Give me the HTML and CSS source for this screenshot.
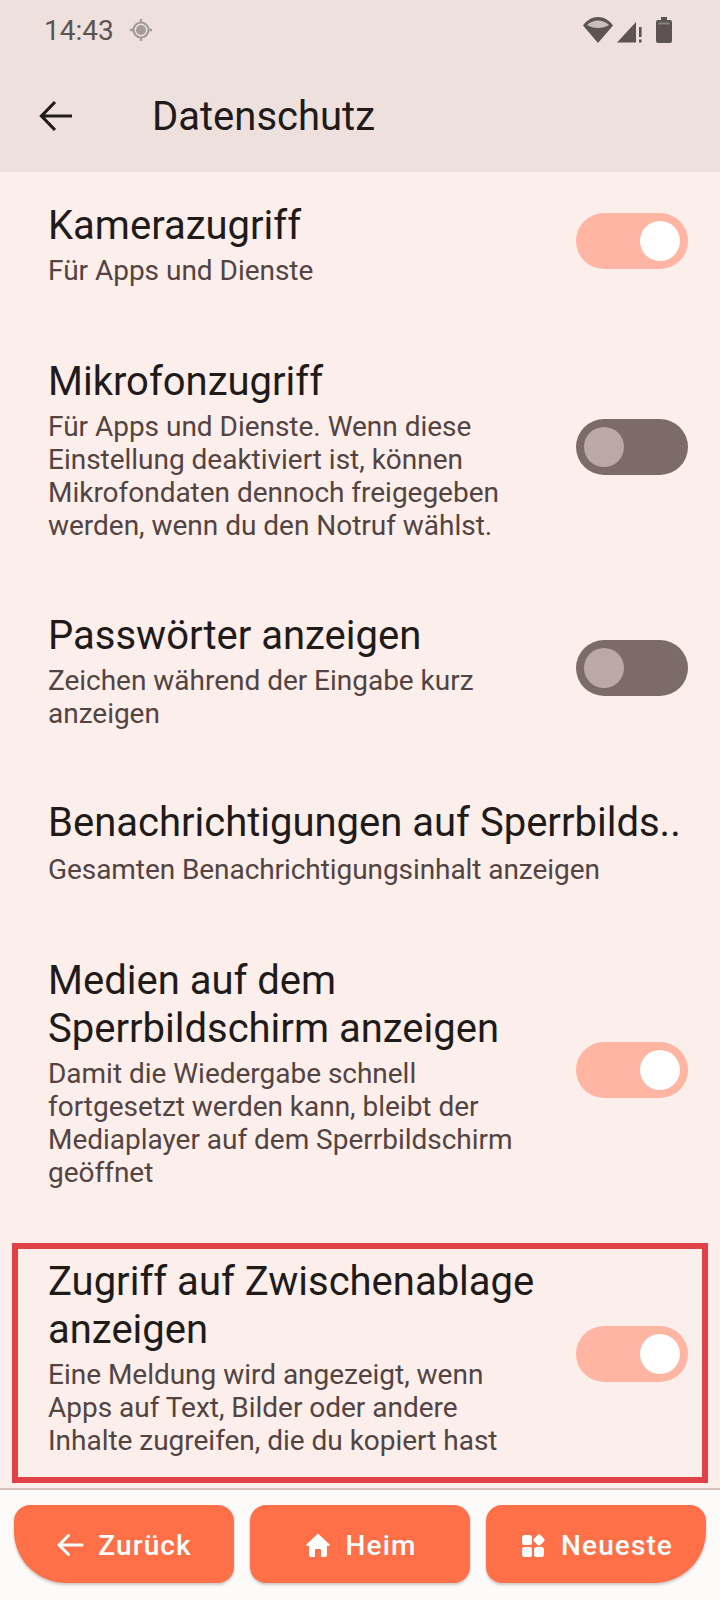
FILE: index.html
```html
<!DOCTYPE html>
<html>
<head>
  <title>Datenschutz</title>
  <link rel="stylesheet" href="styles.css">
</head>
<body>
  <header class="top">
    <div class="status">
      <span class="time">14:43</span>
      <svg class="loc" width="24" height="24" viewBox="0 0 24 24"><circle cx="12" cy="12" r="5" fill="#a39b99"/><circle cx="12" cy="12" r="7.500" fill="none" stroke="#a39b99" stroke-width="2.200"/><path d="M12 1v4M12 19v4M1 12h4M19 12h4" stroke="#a39b99" stroke-width="2.400"/></svg>
      <span class="grow"></span>
      <svg class="wifi" width="30" height="26" viewBox="0 0 30 26"><path d="M15 26 0 8.500C4 3 9 0 15 0S26 3 30 8.500z" fill="#5c5452"/><path d="M4 8C7 5 11 3.500 15 3.500S23 5 26 8C23 10 19 11 15 11S7 10 4 8z" fill="#eee0dd" opacity=".75"/></svg>
      <svg class="sig" width="25" height="26" viewBox="0 0 25 26"><path d="M0 25.500 19 5v20.500z" fill="#5c5452"/><path d="M22 10h2.600v10H22zM22 22.500h2.600v3H22z" fill="#5c5452"/></svg>
      <svg class="bat" width="16" height="26" viewBox="0 0 16 26"><path d="M5 0h6v3h3a2 2 0 0 1 2 2v19a2 2 0 0 1-2 2H2a2 2 0 0 1-2-2V5a2 2 0 0 1 2-2h3z" fill="#5c5452"/><path d="M2.500 5.500h11v2h-11z" fill="#8a8280"/></svg>
    </div>
    <div class="appbar">
      <svg width="36" height="36" viewBox="0 0 36 36"><path d="M34 18H4M17 4 3.500 18 17 32" fill="none" stroke="#201a19" stroke-width="3.200"/></svg>
      <h1>Datenschutz</h1>
    </div>
  </header>

  <main class="list">
    <div class="row row-kamera">
      <div class="text">
        <div class="title">Kamerazugriff</div>
        <div class="sub">Für Apps und Dienste</div>
      </div>
      <div class="switch on"><span></span></div>
    </div>
    <div class="row row-mikro">
      <div class="text">
        <div class="title">Mikrofonzugriff</div>
        <div class="sub">Für Apps und Dienste. Wenn diese Einstellung deaktiviert ist, können Mikrofondaten dennoch freigegeben werden, wenn du den Notruf wählst.</div>
      </div>
      <div class="switch"><span></span></div>
    </div>
    <div class="row row-pass">
      <div class="text">
        <div class="title">Passwörter anzeigen</div>
        <div class="sub">Zeichen während der Eingabe kurz anzeigen</div>
      </div>
      <div class="switch"><span></span></div>
    </div>
    <div class="row row-benach">
      <div class="text">
        <div class="title nowrap">Benachrichtigungen auf Sperrbilds..</div>
        <div class="sub">Gesamten Benachrichtigungsinhalt anzeigen</div>
      </div>
    </div>
    <div class="row row-medien">
      <div class="text">
        <div class="title">Medien auf dem Sperrbildschirm anzeigen</div>
        <div class="sub">Damit die Wiedergabe schnell fortgesetzt werden kann, bleibt der Mediaplayer auf dem Sperrbildschirm geöffnet</div>
      </div>
      <div class="switch on"><span></span></div>
    </div>
    <div class="row row-zugriff">
      <div class="text">
        <div class="title">Zugriff auf Zwischenablage anzeigen</div>
        <div class="sub">Eine Meldung wird angezeigt, wenn Apps auf Text, Bilder oder andere Inhalte zugreifen, die du kopiert hast</div>
      </div>
      <div class="switch on"><span></span></div>
      <div class="mark"></div>
    </div>
  </main>

  <nav class="bottom">
    <button class="btn first">
      <svg width="28" height="28" viewBox="0 0 28 28"><path d="M26 14H3M12.500 4.500 3 14l9.500 9.500" fill="none" stroke="#fff" stroke-width="3" stroke-linecap="round" stroke-linejoin="round"/></svg>
      Zurück
    </button>
    <button class="btn">
      <svg width="28" height="28" viewBox="0 0 28 28"><path d="M14 2.500 2.600 13.200a1 1 0 0 0 .7 1.700H5V24a2 2 0 0 0 2 2h4v-7a1 1 0 0 1 1-1h4a1 1 0 0 1 1 1v7h4a2 2 0 0 0 2-2v-9.100h1.700a1 1 0 0 0 .7-1.700z" fill="#fff"/></svg>
      Heim
    </button>
    <button class="btn last">
      <svg width="28" height="28" viewBox="0 0 28 28"><rect x="3" y="4" width="10" height="10" rx="2.500" fill="#fff"/><rect x="3" y="16" width="10" height="10" rx="2.500" fill="#fff"/><rect x="15" y="16" width="10" height="10" rx="2.500" fill="#fff"/><rect x="15.500" y="4.500" width="9" height="9" rx="2" fill="#fff" transform="rotate(45 20 9)"/></svg>
      Neueste
    </button>
  </nav>
</body>
</html>
```

FILE: styles.css
```css
html, body {
  margin: 0;
  padding: 0;
}
body {
  width: 720px;
  height: 1600px;
  background-color: #fceeeb;
  font-family: Roboto, sans-serif;
  color: #201a19;
  display: flex;
  flex-direction: column;
  overflow: hidden;
}
.top {
  background-color: #eee0dd;
  height: 172px;
  flex: none;
}
.status {
  height: 60px;
  padding: 0 48px 0 44px;
  display: flex;
  align-items: center;
  color: #5c5452;
}
.time {
  font-size: 28px;
  margin-right: 15px;
}
.grow {
  flex: 1;
}
.sig {
  margin-left: 4px;
}
.bat {
  margin-left: 14px;
}
.appbar {
  height: 112px;
  padding-left: 38px;
  display: flex;
  align-items: center;
}
.appbar h1 {
  margin: 0 0 0 78px;
  font-size: 40px;
  font-weight: 400;
}

.list {
  flex: 1;
}
.row {
  position: relative;
  display: flex;
  align-items: center;
  padding: 0 32px 0 48px;
}
.row-kamera { padding-top: 30px; }
.row-mikro { padding-top: 71px; }
.row-pass { padding-top: 70px; }
.row-benach { padding-top: 69px; }
.row-medien { padding-top: 71px; }
.row-zugriff { padding-top: 69px; }
.text {
  flex: 1;
  min-width: 0;
}
.title {
  font-size: 40px;
  line-height: 48px;
}
.nowrap {
  white-space: nowrap;
}
.sub {
  margin-top: 4px;
  font-size: 28px;
  line-height: 33px;
  letter-spacing: -0.02px;
  color: #534341;
  width: 470px;
}
.row-benach .sub {
  margin-top: 6px;
  letter-spacing: -0.07px;
  width: auto;
}
.switch {
  flex: none;
  width: 112px;
  height: 56px;
  margin-bottom: 7px;
  border-radius: 28px;
  background-color: #7d6b68;
  display: flex;
  align-items: center;
  padding: 0 8px;
  box-sizing: border-box;
}
.switch span {
  width: 40px;
  height: 40px;
  border-radius: 50%;
  background-color: #bba9a5;
}
.switch.on {
  background-color: #ffb5a2;
  justify-content: flex-end;
}
.switch.on span {
  background-color: #fff;
}
.mark {
  position: absolute;
  left: 12px;
  top: 54px;
  width: 696px;
  height: 240px;
  border: 6px solid #e04146;
  box-sizing: border-box;
}

.bottom {
  flex: none;
  height: 112px;
  box-sizing: border-box;
  border-top: 2px solid #d8c2be;
  background-color: #fdfafa;
  padding: 15px 14px 0;
  display: flex;
  gap: 16px;
}
.btn {
  flex: 1;
  height: 78px;
  border: none;
  border-radius: 16px;
  background-color: #ff7048;
  color: #fff;
  font-family: Roboto, sans-serif;
  font-size: 28px;
  font-weight: 500;
  letter-spacing: 1.1px;
  display: flex;
  align-items: center;
  justify-content: center;
  gap: 14px;
  padding: 2px 0 0;
  box-shadow: 0 2px 3px rgba(0, 0, 0, 0.2);
}
.first {
  border-bottom-left-radius: 52px;
}
.last {
  border-bottom-right-radius: 52px;
}
```
